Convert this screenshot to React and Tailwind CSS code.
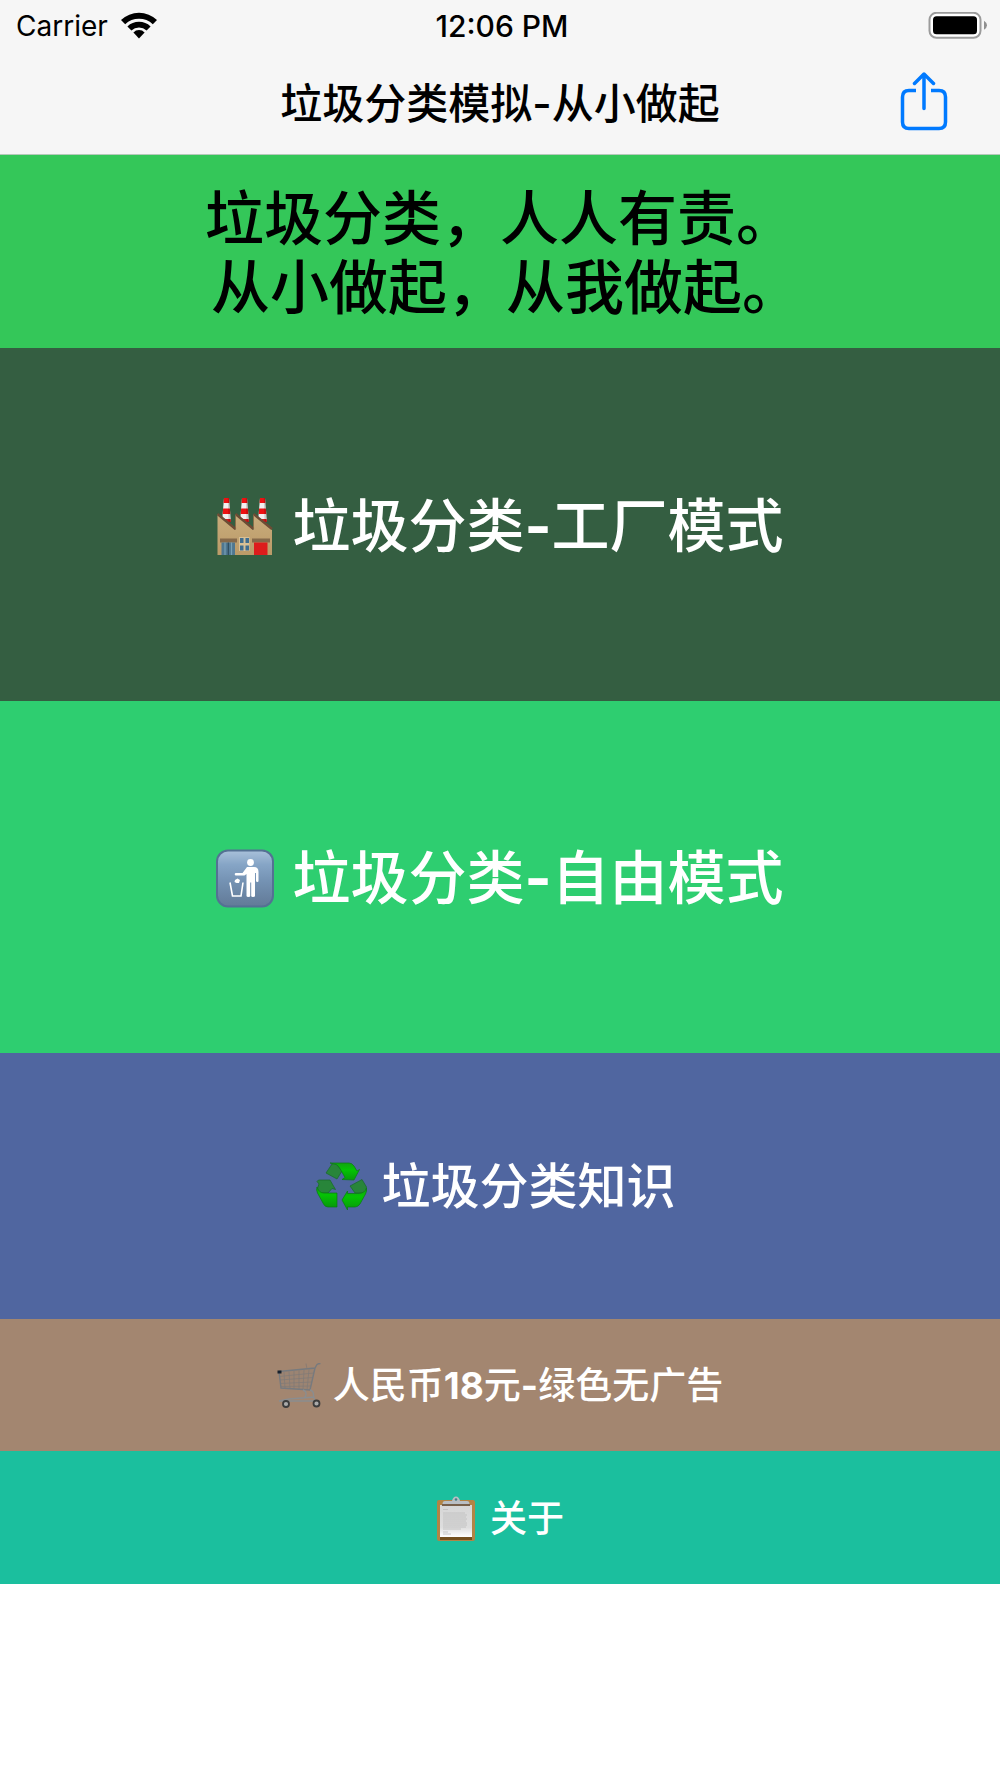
function WifiIcon() {
  return (
    <svg viewBox="0 0 38 28" className="h-7 w-[38px]" aria-hidden="true">
      <path d="M1 8 A26 26 0 0 1 37 8 L32.8 12.2 A20 20 0 0 0 5.2 12.2 Z" />
      <path d="M7.4 14.4 A17 17 0 0 1 30.6 14.4 L26.6 18.4 A11.4 11.4 0 0 0 11.4 18.4 Z" />
      <path d="M13.4 20.4 A8 8 0 0 1 24.6 20.4 L19 26.4 Z" />
    </svg>
  );
}

function BatteryIcon() {
  return (
    <svg viewBox="0 0 60 28" className="h-7 w-[60px]" aria-hidden="true">
      <rect x="1.5" y="0.8" width="51" height="25" rx="7" fill="#fff" stroke="#9b9b9b" strokeWidth="2" />
      <rect x="5" y="4.3" width="44" height="18" rx="3.5" fill="#000" />
      <path d="M56 8.800 Q59 10.800 59 13.300 Q59 15.800 56 17.800 Z" fill="#8f8f8f" />
    </svg>
  );
}

function ShareIcon() {
  return (
    <svg
      viewBox="0 0 48 60"
      className="h-[60px] w-12"
      fill="none"
      stroke="#007aff"
      strokeWidth="3.5"
      aria-hidden="true"
    >
      <path d="M16 18.500 H9 Q2.500 18.500 2.500 25 V50 Q2.500 56.500 9 56.500 H39 Q45.500 56.500 45.500 50 V25 Q45.500 18.500 39 18.500 H31" />
      <path d="M24 36.500 V2 M14.500 11.500 L24 2 L33.500 11.500" strokeLinecap="round" strokeLinejoin="round" />
    </svg>
  );
}

function Chimney({ x }) {
  return (
    <g transform={`translate(${x} 0)`}>
      <path d="M2 1 H7 L9 25 H0 Z" fill="#f4f0f0" />
      <path d="M2 1 H7 L7.400 6 H1.600 Z" fill="#ec1212" />
      <path d="M1.100 11.500 H7.900 L8.300 17 H0.700 Z" fill="#ec1212" />
      <path d="M0.300 22 H8.700 L9 25 H0 Z" fill="#d51818" />
      <path d="M5.800 1 H7 L9 25 H6.500 Z" fill="#000" opacity="0.15" />
    </g>
  );
}

function FactoryIcon() {
  return (
    <svg viewBox="0 0 58 60" className="h-[60px] w-[58px]" aria-hidden="true">
      <defs>
        <linearGradient id="wall" x1="0" y1="0" x2="0" y2="1">
          <stop offset="0" stopColor="#c9ac7c" />
          <stop offset="1" stopColor="#bb9b68" />
        </linearGradient>
      </defs>
      <Chimney x={6} />
      <Chimney x={24} />
      <Chimney x={42} />
      <path d="M1.500 17 L19.500 33 V17 L37.500 33 V17 L56 33 V58 H1.500 Z" fill="url(#wall)" />
      <path
        d="M1.500 17 L19.500 32 M19.500 17 L37.500 32 M37.500 17 L56 32"
        stroke="#6c4c35"
        strokeWidth="2.400"
        fill="none"
      />
      <path d="M19.500 18 V32 M37.500 18 V32" stroke="#8b6a45" strokeWidth="0.800" />
      <rect x="4" y="41.500" width="17" height="4" fill="#85694a" />
      <rect x="36" y="41.500" width="18" height="4" fill="#85694a" />
      <rect x="5.500" y="45.500" width="13.500" height="12.500" fill="#4f7790" />
      <path d="M9 45.500 V58 M15.500 45.500 V58" stroke="#78a0b4" strokeWidth="1.200" />
      <path d="M12.300 45.500 V58" stroke="#2e4b5c" strokeWidth="1.200" />
      <rect x="38" y="45.500" width="13.500" height="12.500" fill="#dd1c1c" />
      <rect x="23" y="40" width="10.500" height="14" fill="#d9c095" />
      <g fill="#406d8e">
        <rect x="24" y="41" width="3.500" height="5" />
        <rect x="29.500" y="41" width="3.500" height="5" />
        <rect x="24" y="48.500" width="3.500" height="5" />
        <rect x="29.500" y="48.500" width="3.500" height="5" />
      </g>
    </svg>
  );
}

function LitterIcon() {
  return (
    <svg viewBox="0 0 58 60" className="h-[60px] w-[58px]" aria-hidden="true">
      <defs>
        <linearGradient id="sign" x1="0" y1="0" x2="0" y2="1">
          <stop offset="0" stopColor="#a9c1da" />
          <stop offset="0.250" stopColor="#86a5c6" />
          <stop offset="0.550" stopColor="#7492b3" />
          <stop offset="1" stopColor="#627a97" />
        </linearGradient>
      </defs>
      <rect x="1" y="1.500" width="56" height="56" rx="11" fill="url(#sign)" stroke="#547193" strokeWidth="2" />
      <g fill="#fff">
        <circle cx="34.500" cy="13.500" r="3.400" />
        <path d="M31 18 H38 Q42.500 18 42.500 23 V32 Q42.500 33 41.500 33 Q40 33 40 32 V24 H39 V47 Q39 48 37 48 Q35.200 48 35.200 47 V33.500 H34.200 V47 Q34.200 48 32.500 48 Q30.500 48 30.500 47 V25 L28.500 26.500 H20 Q18.700 26.500 18.700 25.300 Q18.700 24 20 24 H26.500 Z" />
        <path d="M19 31 L21.500 29.500 L24 31 L23 34 L20.500 34 L18.500 33 Z" />
      </g>
      <path d="M14 33.500 L16.500 47 H25 L27 33.500" fill="none" stroke="#fff" strokeWidth="1.600" />
    </svg>
  );
}

function RecycleIcon() {
  return (
    <svg viewBox="0 0 52 50" className="h-[50px] w-[52px]" aria-hidden="true">
      <defs>
        <linearGradient id="leaf" x1="0" y1="0" x2="0" y2="1">
          <stop offset="0" stopColor="#12a312" />
          <stop offset="0.400" stopColor="#04c404" />
          <stop offset="1" stopColor="#079a0b" />
        </linearGradient>
      </defs>
      <g fill="#28853a" stroke="#17692a" strokeWidth="0.700">
        <path d="M10 11 L16 2 Q18 1 20 2 L26 9 L21 17 Z" />
        <path d="M1 19.500 L2.500 18 H14 L19.500 27.500 L16 26.500 L12 31 L3 31 Q0 26 3 22 Z" />
        <path d="M34 24 L46 17.500 L50.500 25 Q51 28 48 31 L39 31 Z" />
      </g>
      <g fill="url(#leaf)" stroke="#087b12" strokeWidth="0.700">
        <path d="M14 1 H33 Q36 1 38 4 L41 9 L43.500 7.500 L38 18 L26 17.500 L29 15.500 L23 5 Q21 2 18 2 Z" />
        <path d="M1 25 Q3 31 8 31 H21 V45 H12 Q9 45 7.500 42 L1.500 31 Q0 28 1 25 Z" />
        <path d="M26 38 L31.500 29 V31.500 H43 Q49 31 50.500 26 Q51 29 49.500 32 L44 42 Q42 45 39 45 H31.500 V48 Z" />
      </g>
    </svg>
  );
}

function CartIcon() {
  return (
    <svg viewBox="0 0 46 46" className="h-[46px] w-[46px]" fill="none" aria-hidden="true">
      <path d="M2 9 L38 5.500 L33 27 L4 25 Z" fill="#9c8472" />
      <g stroke="#7f7a77" strokeWidth="0.700">
        <path d="M2 13.500 L37 10 M3 17 L36 14.500 M3 20.500 L35 19 M4 23.500 L34 23" />
        <path d="M7 9 L8 25.500 M12 8.500 L13 26 M17 8 V26 M22 7.500 V26 M27 7 L26 26 M32 6.500 L30 27" />
      </g>
      <path d="M2 8.500 L38 5 L40 1.500 Q41 0.500 43.500 0.500 M38 5 L33 27 L4 25 L2 9" stroke="#777a7e" strokeWidth="1.400" />
      <path d="M29 0.500 L30 6" stroke="#847a73" strokeWidth="0.800" />
      <path d="M26 27 Q31 29 28 34 L25 36 M33 27 Q37 28 36.500 33 L38 38 M2 38 L12 36 L37 34 M2 38 H38" stroke="#8b8d8f" strokeWidth="1.400" />
      <rect x="0.500" y="7.500" width="4" height="3" fill="#17212d" />
      <circle cx="9" cy="41" r="3" fill="#aaa" stroke="#3c3c3c" strokeWidth="1.800" />
      <circle cx="39.500" cy="40.500" r="3" fill="#aaa" stroke="#3c3c3c" strokeWidth="1.800" />
    </svg>
  );
}

function ClipboardIcon() {
  return (
    <svg viewBox="0 0 40 46" className="h-[46px] w-10" aria-hidden="true">
      <defs>
        <linearGradient id="paper" x1="0" y1="0" x2="0" y2="1">
          <stop offset="0" stopColor="#d6d6d6" />
          <stop offset="0.700" stopColor="#dedede" />
          <stop offset="1" stopColor="#fff" />
        </linearGradient>
      </defs>
      <rect x="1" y="4" width="38" height="41" rx="2" fill="#b28445" />
      <rect x="4" y="41" width="32" height="3" fill="#74501f" />
      <rect x="4" y="9" width="32" height="32" fill="url(#paper)" />
      <rect x="6" y="8" width="28" height="2" fill="#77604b" />
      <path d="M6.500 8 Q6.500 5 9 5 H16 Q17 0.500 20 0.500 Q23 0.500 24 5 H31 Q33.500 5 33.500 8 Z" fill="#b9bec4" />
      <circle cx="20" cy="3.500" r="1.300" fill="#477f87" />
      <path
        d="M7 13.500 H12 M7 17 H29 M7 19 H31 M7 21 H30 M7 23 H31 M7 25 H30 M7 27 H31 M7 29 H31 M7 31 H30 M7 33 H25 M7 36 H12 M7 38 H15"
        stroke="#bdbdbd"
        strokeWidth="0.800"
      />
    </svg>
  );
}

const menu = [
  { label: "垃圾分类-工厂模式", Icon: FactoryIcon, style: "bg-[#345e41] gap-[18px] pt-36 pb-[140px] text-[58px] leading-[69px]" },
  { label: "垃圾分类-自由模式", Icon: LitterIcon, style: "bg-[#2ece70] gap-[18px] pt-[143px] pb-[140px] text-[58px] leading-[69px]" },
  { label: "垃圾分类知识", Icon: RecycleIcon, style: "bg-[#5066a0] gap-[13px] pt-[105px] pb-[103px] pr-2 text-[49px] leading-[58px]" },
  { label: "人民币18元-绿色无广告", Icon: CartIcon, style: "bg-[#a38670] gap-2.5 pt-[45px] pb-[43px] text-[37px] leading-[44px]" },
  { label: "关于", Icon: ClipboardIcon, style: "bg-[#1bbf9e] gap-[14px] pt-[45px] pb-[43px] text-[37px] leading-[45px]" },
];

function MenuButton({ label, Icon, style }) {
  return (
    <button type="button" className={`flex w-full items-center justify-center font-medium text-white ${style}`}>
      <span className="-my-2 shrink-0">
        <Icon />
      </span>
      <span>
        {label.split(/([-\d]+)/).map((part, i) =>
          i % 2 ? (
            <b key={i} className="font-bold">
              {part}
            </b>
          ) : (
            part
          )
        )}
      </span>
    </button>
  );
}

export default function App() {
  return (
    <div className="min-h-screen bg-white font-['Inter','Noto_Sans_CJK_SC',sans-serif] text-black" lang="zh-CN">
      <header className="border-b border-[#b5c9ba] bg-[#f6f6f6]">
        <div className="grid grid-cols-[1fr_auto_1fr] items-center pt-2 pr-3 pl-4 text-[28px] leading-[36px]">
          <div className="flex items-center gap-3">
            <span>Carrier</span>
            <WifiIcon />
          </div>
          <time className="text-center text-[30px] font-medium">12:06 PM</time>
          <div className="flex justify-end">
            <BatteryIcon />
          </div>
        </div>
        <div className="grid grid-cols-[1fr_auto_1fr] items-center px-[52px] pt-[26px] pb-5">
          <h1 className="col-start-2 pt-1 text-[42px] leading-[60px] font-medium">垃圾分类模拟-从小做起</h1>
          <button type="button" aria-label="分享" className="justify-self-end">
            <ShareIcon />
          </button>
        </div>
      </header>

      <main>
        <div className="bg-[#34c759] pt-[29px] pb-[26px] text-center text-[59px] leading-[69px] font-medium">
          <p>垃圾分类，人人有责。</p>
          <p className="pl-3">从小做起，从我做起。</p>
        </div>
        <nav>
          {menu.map((item) => (
            <MenuButton key={item.label} {...item} />
          ))}
        </nav>
      </main>
    </div>
  );
}
